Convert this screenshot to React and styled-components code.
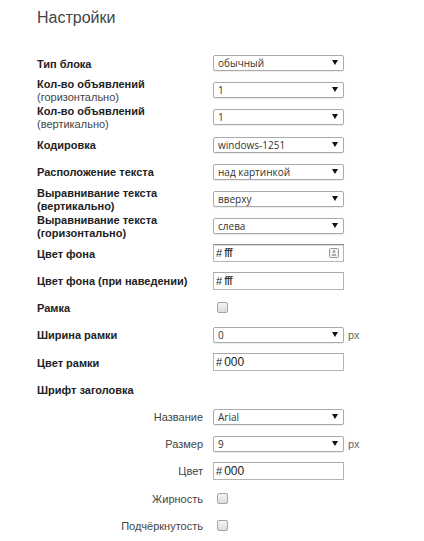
import React from "react";
import styled, { createGlobalStyle } from "styled-components";

const Global = createGlobalStyle`
  html, body { margin: 0; padding: 0; background: #fff; }
  body { font-family: "Liberation Sans", Arial, sans-serif; color: #222; }
`;

const Page = styled.div`
  width: 424px;
  padding: 8px 0 0 37px;
  box-sizing: border-box;
`;

const Title = styled.h1`
  margin: 0;
  font-size: 16px;
  line-height: 20px;
  font-weight: normal;
  color: #444;
`;

const Form = styled.div`
  margin-top: 21.5px;
  display: flex;
  flex-direction: column;
`;

const Row = styled.div`
  display: grid;
  grid-template-columns: 168px 1fr;
  column-gap: 8px;
  align-items: center;
  height: 27.2px;
`;

const Label = styled.div`
  font-size: 11px;
  line-height: 13px;
  font-weight: ${(p) => (p.$sub ? "normal" : "bold")};
  color: ${(p) => (p.$sub ? "#444" : "#222")};
  text-align: ${(p) => (p.$sub ? "right" : "left")};
  padding-right: ${(p) => (p.$sub ? "2px" : "0")};
  transform: translateY(1px);
`;

const Note = styled.span`
  display: block;
  font-weight: ${(p) => (p.$bold ? "bold" : "normal")};
  color: ${(p) => (p.$bold ? "#222" : "#444")};
`;

const Control = styled.div`
  display: flex;
  align-items: center;
  gap: 4px;
  font-size: 0;
`;

const SelectWrap = styled.div`
  position: relative;
  width: 131px;
  height: 16px;
`;

const Select = styled.select`
  display: block;
  appearance: none;
  -webkit-appearance: none;
  width: 100%;
  height: 16px;
  margin: 0;
  padding: 0 14px 0 4px;
  box-sizing: border-box;
  border: 1px solid #aaa;
  border-radius: 2px;
  background: #fff;
  box-shadow: 0 1px 1px rgba(0, 0, 0, 0.08);
  font-family: "Open Sans", "Liberation Sans", sans-serif;
  font-size: 10px;
  line-height: 14px;
  color: #333;
  outline: none;
`;

const Arrow = styled.span`
  position: absolute;
  right: 6px;
  top: 5px;
  width: 0;
  height: 0;
  border-left: 3px solid transparent;
  border-right: 3px solid transparent;
  border-top: 5px solid #111;
  pointer-events: none;
`;

const Unit = styled.span`
  font-size: 11px;
  color: #666;
`;

const InputBox = styled.label`
  display: flex;
  align-items: center;
  width: 131px;
  height: 18px;
  box-sizing: border-box;
  padding: 0 4px 0 2px;
  border: 1px solid #b4b4b4;
  border-top-color: ${(p) => (p.$focus ? "#8a8a8a" : "#aaa")};
  box-shadow: ${(p) => (p.$focus ? "inset 0 1px 1px rgba(0,0,0,0.15)" : "none")};
  background: #fff;
  font-size: 12px;
  color: #222;
`;

const Hash = styled.span`
  font-size: 11px;
  margin-right: 2px;
`;

const Input = styled.input`
  flex: 1;
  min-width: 0;
  border: none;
  outline: none;
  padding: 0;
  margin: 0;
  background: transparent;
  font-family: "Liberation Sans", Arial, sans-serif;
  font-size: 12px;
  color: #222;
  letter-spacing: ${(p) => (p.$tight ? "-0.5px" : "0")};
`;

const Check = styled.span`
  display: inline-block;
  margin-left: 4px;
  width: 11px;
  height: 11px;
  box-sizing: border-box;
  border: 1px solid #a5a5a5;
  border-radius: 2px;
  background: linear-gradient(#f4f4f4, #dcdcdc);
`;

const PickerIcon = () => (
  <svg width="10" height="10" viewBox="0 0 10 10" style={{ flex: "none" }}>
    <rect x="0.5" y="0.5" width="9" height="9" rx="1" fill="#f4f4f4" stroke="#999" />
    <circle cx="5" cy="3.6" r="1.3" fill="#999" />
    <path d="M2.5 7.8 L7.5 7.8 L6.8 6.2 L3.2 6.2 Z" fill="#999" />
  </svg>
);

const Dropdown = ({ value }) => (
  <SelectWrap>
    <Select defaultValue={value}>
      <option value={value}>{value}</option>
    </Select>
    <Arrow />
  </SelectWrap>
);

const ColorField = ({ value, focus }) => (
  <InputBox $focus={focus}>
    <Hash>#</Hash>
    <Input defaultValue={value} $tight={value === "fff"} />
    {focus && <PickerIcon />}
  </InputBox>
);

export default function App() {
  return (
    <>
      <Global />
      <Page>
        <Title>Настройки</Title>
        <Form>
          <Row>
            <Label>Тип блока</Label>
            <Control><Dropdown value="обычный" /></Control>
          </Row>
          <Row>
            <Label>Кол-во объявлений<Note>(горизонтально)</Note></Label>
            <Control><Dropdown value="1" /></Control>
          </Row>
          <Row>
            <Label>Кол-во объявлений<Note>(вертикально)</Note></Label>
            <Control><Dropdown value="1" /></Control>
          </Row>
          <Row>
            <Label>Кодировка</Label>
            <Control><Dropdown value="windows-1251" /></Control>
          </Row>
          <Row>
            <Label>Расположение текста</Label>
            <Control><Dropdown value="над картинкой" /></Control>
          </Row>
          <Row>
            <Label>Выравнивание текста<Note $bold>(вертикально)</Note></Label>
            <Control><Dropdown value="вверху" /></Control>
          </Row>
          <Row>
            <Label>Выравнивание текста<Note $bold>(горизонтально)</Note></Label>
            <Control><Dropdown value="слева" /></Control>
          </Row>
          <Row>
            <Label>Цвет фона</Label>
            <Control><ColorField value="fff" focus /></Control>
          </Row>
          <Row>
            <Label>Цвет фона (при наведении)</Label>
            <Control><ColorField value="fff" /></Control>
          </Row>
          <Row>
            <Label>Рамка</Label>
            <Control><Check /></Control>
          </Row>
          <Row>
            <Label>Ширина рамки</Label>
            <Control><Dropdown value="0" /><Unit>px</Unit></Control>
          </Row>
          <Row>
            <Label>Цвет рамки</Label>
            <Control><ColorField value="000" /></Control>
          </Row>
          <Row>
            <Label>Шрифт заголовка</Label>
            <Control />
          </Row>
          <Row>
            <Label $sub>Название</Label>
            <Control><Dropdown value="Arial" /></Control>
          </Row>
          <Row>
            <Label $sub>Размер</Label>
            <Control><Dropdown value="9" /><Unit>px</Unit></Control>
          </Row>
          <Row>
            <Label $sub>Цвет</Label>
            <Control><ColorField value="000" /></Control>
          </Row>
          <Row>
            <Label $sub>Жирность</Label>
            <Control><Check /></Control>
          </Row>
          <Row>
            <Label $sub>Подчёркнутость</Label>
            <Control><Check /></Control>
          </Row>
        </Form>
      </Page>
    </>
  );
}
